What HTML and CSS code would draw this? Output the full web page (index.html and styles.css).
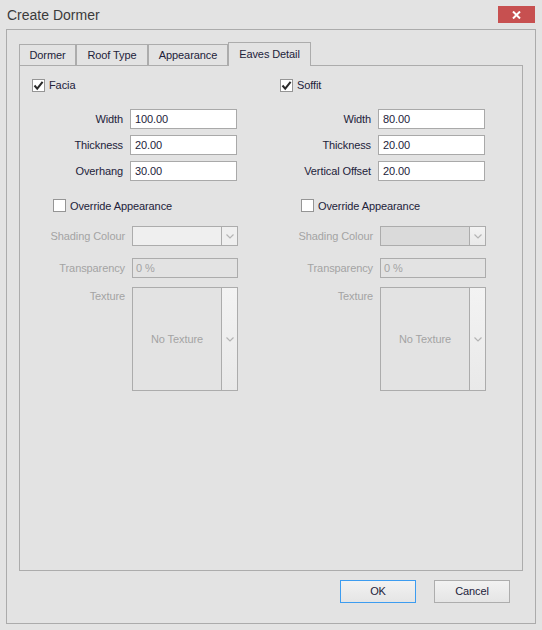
FILE: index.html
```html
<!DOCTYPE html>
<html>
<head>
<meta charset="utf-8">
<link rel="stylesheet" href="styles.css">
</head>
<body>
<div class="titlebar">
  <div class="title">Create Dormer</div>
  <div class="close"><svg width="9" height="8" viewBox="0 0 9 8"><path d="M1 0.5 L8 7.5 M8 0.5 L1 7.5" stroke="#fff" stroke-width="2"/></svg></div>
</div>
<div class="frame">
  <div class="tabs">
    <div class="tab t1">Dormer</div>
    <div class="tab t2">Roof Type</div>
    <div class="tab t3">Appearance</div>
    <div class="tab t4 active">Eaves Detail</div>
  </div>
  <div class="panel">
    <div class="col">
      <div class="chk-row"><span class="chk"><svg width="11" height="11" viewBox="0 0 11 11"><path d="M1.5 5.5 L4.2 8.6 L9.6 1.8" fill="none" stroke="#2a2a2a" stroke-width="2"/></svg></span><span>Facia</span></div>
      <div class="fields">
        <div class="field"><span class="lbl">Width</span><span class="input">100.00</span></div>
        <div class="field"><span class="lbl">Thickness</span><span class="input">20.00</span></div>
        <div class="field"><span class="lbl">Overhang</span><span class="input">30.00</span></div>
      </div>
      <div class="override"><span class="chk"></span><span>Override Appearance</span></div>
      <div class="dfields">
        <div class="drow"><span class="dlbl">Shading Colour</span><div class="combo light"><span class="combo-val"></span><span class="combo-btn"><svg width="8" height="5" viewBox="0 0 8 5"><path d="M0.5 0.5 L4 4 L7.5 0.5" fill="none" stroke="#b4b4b4" stroke-width="1.2"/></svg></span></div></div>
        <div class="drow"><span class="dlbl">Transparency</span><div class="dbox">0 %</div></div>
        <div class="drow tex-row"><span class="dlbl tex-lbl">Texture</span><div class="texture"><span class="tex-val">No Texture</span><span class="combo-btn"><svg width="8" height="5" viewBox="0 0 8 5"><path d="M0.5 0.5 L4 4 L7.5 0.5" fill="none" stroke="#b4b4b4" stroke-width="1.2"/></svg></span></div></div>
      </div>
    </div>
    <div class="col">
      <div class="chk-row"><span class="chk"><svg width="11" height="11" viewBox="0 0 11 11"><path d="M1.5 5.5 L4.2 8.6 L9.6 1.8" fill="none" stroke="#2a2a2a" stroke-width="2"/></svg></span><span>Soffit</span></div>
      <div class="fields">
        <div class="field"><span class="lbl">Width</span><span class="input">80.00</span></div>
        <div class="field"><span class="lbl">Thickness</span><span class="input">20.00</span></div>
        <div class="field"><span class="lbl">Vertical Offset</span><span class="input">20.00</span></div>
      </div>
      <div class="override"><span class="chk"></span><span>Override Appearance</span></div>
      <div class="dfields">
        <div class="drow"><span class="dlbl">Shading Colour</span><div class="combo dark"><span class="combo-val"></span><span class="combo-btn"><svg width="8" height="5" viewBox="0 0 8 5"><path d="M0.5 0.5 L4 4 L7.5 0.5" fill="none" stroke="#b4b4b4" stroke-width="1.2"/></svg></span></div></div>
        <div class="drow"><span class="dlbl">Transparency</span><div class="dbox">0 %</div></div>
        <div class="drow tex-row"><span class="dlbl tex-lbl">Texture</span><div class="texture"><span class="tex-val">No Texture</span><span class="combo-btn"><svg width="8" height="5" viewBox="0 0 8 5"><path d="M0.5 0.5 L4 4 L7.5 0.5" fill="none" stroke="#b4b4b4" stroke-width="1.2"/></svg></span></div></div>
      </div>
    </div>
  </div>
  <div class="buttons">
    <div class="btn ok">OK</div>
    <div class="btn">Cancel</div>
  </div>
</div>
</body>
</html>
```
FILE: styles.css
```css
* { box-sizing: border-box; }
html, body { margin: 0; padding: 0; }
body {
  width: 542px;
  height: 630px;
  background: #e3e3e3;
  font-family: "Liberation Sans", Arial, sans-serif;
  font-size: 11px;
  letter-spacing: -0.1px;
  color: #22223a;
  overflow: hidden;
}
.titlebar {
  height: 29px;
  display: flex;
  justify-content: space-between;
  align-items: flex-start;
}
.title {
  font-size: 14px;
  line-height: 17px;
  padding: 7px 0 0 7px;
  color: #3b3b3b;
  letter-spacing: 0;
}
.close {
  width: 37px;
  height: 17px;
  margin: 6px 7px 0 0;
  background: #c75050;
  display: flex;
  align-items: center;
  justify-content: center;
}
.frame {
  margin-left: 6px;
  width: 530px;
  height: 595px;
  border: 1px solid #ababab;
  padding: 12px 12px 0 12px;
}
.tabs {
  display: flex;
  align-items: flex-end;
  height: 23px;
  position: relative;
  z-index: 1;
}
.tab {
  height: 21px;
  border: 1px solid #acacac;
  border-bottom: 0;
  text-align: center;
  line-height: 20px;
  background: #e3e3e3;
}
.t1 { width: 57px; }
.t2 { width: 72px; }
.t3 { width: 80px; }
.t4 { width: 83px; }
.tab.active {
  height: 24px;
  margin-bottom: -1px;
  line-height: 22px;
  padding-bottom: 1px;
}
.panel {
  height: 506px;
  border: 1px solid #acacac;
  display: grid;
  grid-template-columns: 248px 248px;
  align-items: start;
}
.col {
  display: flex;
  flex-direction: column;
}
.chk-row {
  margin-top: 13px;
  padding-left: 12px;
  display: flex;
  align-items: center;
  gap: 4px;
  height: 13px;
  line-height: 13px;
}
.chk {
  width: 13px;
  height: 13px;
  border: 1px solid #959595;
  background: #fff;
  display: flex;
  align-items: center;
  justify-content: center;
  flex: none;
}
.fields {
  margin-top: 17px;
  display: flex;
  flex-direction: column;
  gap: 6px;
}
.field {
  display: grid;
  grid-template-columns: 103px 107px;
  column-gap: 7px;
  align-items: center;
}
.lbl { text-align: right; white-space: nowrap; }
.input {
  height: 20px;
  border: 1px solid #a9a9a9;
  background: #fff;
  line-height: 18px;
  padding-left: 4px;
  color: #22223a;
}
.override {
  margin-top: 18px;
  padding-left: 33px;
  display: flex;
  align-items: center;
  gap: 4px;
  height: 13px;
}
.dfields {
  margin-top: 14px;
  display: flex;
  flex-direction: column;
}
.drow {
  display: grid;
  grid-template-columns: 105px 106px;
  column-gap: 7px;
  align-items: center;
  color: #a4a4a4;
}
.drow + .drow { margin-top: 12px; }
.drow.tex-row { margin-top: 9px; align-items: start; }
.dlbl { text-align: right; white-space: nowrap; }
.tex-lbl { padding-top: 3px; }
.combo {
  height: 20px;
  border: 1px solid #acacac;
  display: flex;
}
.combo-val { flex: 1; }
.combo.light .combo-val { background: #efefef; }
.combo.dark .combo-val { background: #dadada; }
.combo-btn {
  width: 16px;
  border-left: 1px solid #acacac;
  display: flex;
  align-items: center;
  justify-content: center;
  background: linear-gradient(#f3f3f3, #e9e9e9);
}
.combo.light .combo-btn { background: #efefef; }
.dbox {
  height: 20px;
  border: 1px solid #acacac;
  line-height: 18px;
  padding-left: 3px;
}
.texture {
  height: 104px;
  border: 1px solid #acacac;
  display: flex;
}
.tex-val {
  flex: 1;
  display: flex;
  align-items: center;
  justify-content: center;
}
.buttons {
  margin-top: 9px;
  margin-right: 13px;
  display: flex;
  justify-content: flex-end;
  gap: 18px;
}
.btn {
  width: 76px;
  height: 23px;
  border: 1px solid #adadad;
  background: linear-gradient(#f2f2f2, #e5e5e5);
  text-align: center;
  line-height: 21px;
  color: #22223a;
}
.btn.ok { border-color: #3c9cf0; }
```
